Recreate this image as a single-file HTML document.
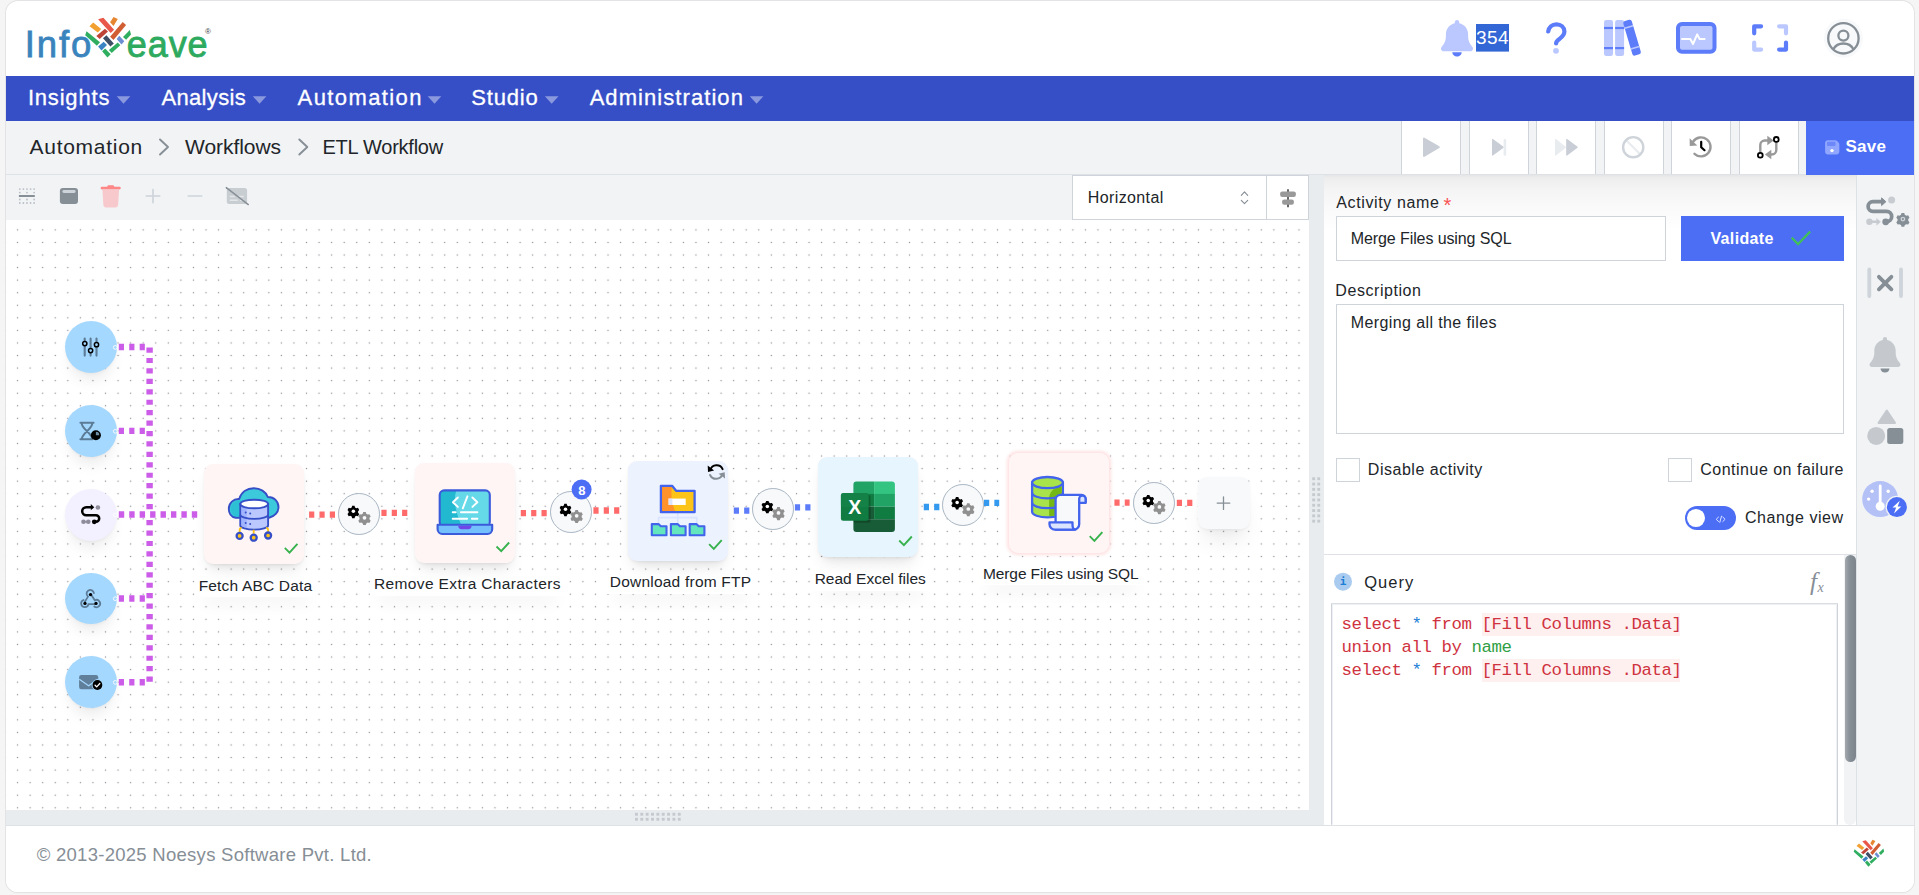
<!DOCTYPE html>
<html lang="en">
<head>
<meta charset="utf-8">
<title>ETL Workflow - Infoveave</title>
<style>
*{box-sizing:border-box;margin:0;padding:0}
html,body{width:1919px;height:895px;overflow:hidden}
body{background:#f5f5f5;font-family:"Liberation Sans",sans-serif;position:relative;color:#212529}
.abs{position:absolute}
.t{position:absolute;white-space:nowrap;line-height:1;display:block}
#card{position:absolute;left:6px;top:1px;width:1908px;height:891px;background:#fff;border-radius:12px;box-shadow:0 0 0 1px #e3e3e5,0 1px 2px rgba(0,0,0,.06);overflow:hidden}
#card>*{position:absolute}
#nav{left:0;top:75px;width:1908px;height:45px;background:#364fc7}
#crumb{left:0;top:120px;width:1908px;height:54px;background:#f1f3f5;border-bottom:1px solid #dee2e6}
#tools{left:0;top:174px;width:1303px;height:45px;background:#f1f3f5}
#canvas{left:0;top:219px;width:1303px;height:590px;background:#fff;overflow:hidden}
#vsplit{left:1303px;top:174px;width:15px;height:651px;background:#e9ecef}
#hsplit{left:0;top:809px;width:1318px;height:15px;background:#e9ecef}
#panel{left:1318px;top:174px;width:532px;height:651px;background:#fff;overflow:hidden}
#side{left:1850px;top:174px;width:58px;height:651px;background:#f1f3f5;border-left:1px solid #dee2e6}
#footer{left:0;top:824px;width:1908px;height:67px;background:#fff;border-top:1px solid #dee2e6}
.tb{position:absolute;top:121px;height:53px;width:60px;background:#fff;border-left:1px solid #ced4da;border-right:1px solid #ced4da}
svg{position:absolute;overflow:visible}
</style>
</head>
<body>
<div id="card">
  <div id="nav"></div>
  <div id="crumb"></div>
  <div id="tools"></div>
  <div id="canvas">
<div class="abs" id="cv" style="left:-6px;top:-220px;width:1919px;height:895px">
<style>
.nd{position:absolute;width:100px;height:100px;border-radius:9px;box-shadow:0 1px 3px rgba(0,0,0,.05),0 10px 15px -5px rgba(0,0,0,.10),0 7px 7px -5px rgba(0,0,0,.04)}
.st{position:absolute;left:64.700px;width:51.900px;height:51.900px;border-radius:50%;background:#a5d8ff;box-shadow:0 1px 3px rgba(0,0,0,.04),0 12px 16px -6px rgba(0,0,0,.09)}
.gc{position:absolute;width:41.800px;height:41.800px;border-radius:50%;background:#f8f9fa;border:1px solid #a9b6c3}
</style>
<svg style="left:0;top:0" width="1919" height="895" viewBox="0 0 1919 895">
  <defs>
    <pattern id="dots" x="11.280" y="223.600" width="12.563" height="12.563" patternUnits="userSpaceOnUse">
      <circle cx="6.280" cy="6.280" r=".7" fill="#8e8e98"/>
    </pattern>
  </defs>
  <rect x="6" y="220" width="1303" height="590" fill="url(#dots)"/>
  <!-- purple edges -->
  <g fill="none" stroke="#cc5de8" stroke-width="6.400" stroke-dasharray="5.200 5.230">
    <path d="M118.800 347H149.600V511"/>
    <path d="M118.800 682.200H149.600V518"/>
    <path d="M118.800 430.900h27.600"/>
    <path d="M118.800 598.500h27.600"/>
    <path d="M118.800 514.500h79.400" stroke-dasharray="5.400 5.030"/>
  </g>
  <!-- node edges -->
  <g fill="none" stroke-width="6.300" stroke-dasharray="5.200 5.150">
    <path stroke="#ff6b6b" d="M309.100 514.700H335.200"/>
    <path stroke="#ff6b6b" d="M381.400 512.800H407.800"/>
    <path stroke="#ff6b6b" d="M520.800 513.100H547"/>
    <path stroke="#ff6b6b" d="M593.400 510.500H619.300"/>
    <path stroke="#5c7cfa" d="M733.800 510.700H749.600"/>
    <path stroke="#5c7cfa" d="M794.900 507.300H810.600"/>
    <path stroke="#339af0" d="M923.800 507H939.500"/>
    <path stroke="#339af0" d="M984 502.800H999.200"/>
    <path stroke="#ff6b6b" d="M1114.400 502.600H1129.600"/>
    <path stroke="#ff6b6b" d="M1176.800 502.900H1192.400"/>
  </g>
</svg>
<!-- label bgs -->
<div class="abs" style="left:194.5px;top:574.4px;width:122.8px;height:23px;background:#fff;box-shadow:0 14px 16px -8px rgba(0,0,0,.07)"></div>
<div class="abs" style="left:370.0px;top:572.5px;width:195.0px;height:23px;background:#fff;box-shadow:0 14px 16px -8px rgba(0,0,0,.07)"></div>
<div class="abs" style="left:605.8px;top:570.5px;width:149.9px;height:23px;background:#fff;box-shadow:0 14px 16px -8px rgba(0,0,0,.07)"></div>
<div class="abs" style="left:810.5px;top:567.5px;width:120.1px;height:23px;background:#fff;box-shadow:0 14px 16px -8px rgba(0,0,0,.07)"></div>
<div class="abs" style="left:978.7px;top:562.3px;width:164.9px;height:23px;background:#fff;box-shadow:0 14px 16px -8px rgba(0,0,0,.07)"></div>
<!-- start circles -->
<div class="st" style="top:321px"></div>
<div class="st" style="top:404.900px"></div>
<div class="st" style="top:489px;background:#f3f0ff"></div>
<div class="st" style="top:572.500px"></div>
<div class="st" style="top:656.200px"></div>
<!-- nodes -->
<div class="nd" style="left:203.700px;top:464.400px;background:#fff5f5"></div>
<div class="nd" style="left:415.400px;top:463px;background:#fff5f5"></div>
<div class="nd" style="left:628px;top:460.600px;background:#edf2ff"></div>
<div class="nd" style="left:818.100px;top:457px;background:#e7f5ff"></div>
<div class="nd" style="left:1008.600px;top:452.600px;background:#fff5f5;box-shadow:0 0 3.500px 2px #ffe1e1"></div>
<div class="nd" style="left:1197.500px;top:477.300px;width:52px;height:52px;background:#f8f9fa;box-shadow:0 1px 3px rgba(0,0,0,.04),0 18px 22px -6px rgba(0,0,0,.07),0 8px 10px -6px rgba(0,0,0,.04)"></div>
<!-- gear circles -->
<div class="gc" style="left:338.200px;top:492.900px"></div>
<div class="gc" style="left:550.350px;top:490.900px"></div>
<div class="gc" style="left:752.200px;top:488px"></div>
<div class="gc" style="left:942px;top:484.100px"></div>
<div class="gc" style="left:1133.100px;top:482px"></div>
<svg style="left:0;top:0" width="1919" height="895" viewBox="0 0 1919 895">
  <defs>
    <g id="gears">
      <g transform="translate(-5.750 -2.500) scale(.930)">
        <path fill="#000" d="M-1.300-5.900h2.600l.5 1.700 1.500.9 1.700-.4 1.300 2.300-1.200 1.300v1.700l1.200 1.300-1.300 2.300-1.700-.4-1.500.9-.5 1.700h-2.600l-.5-1.700-1.500-.9-1.700.4-1.300-2.300 1.200-1.300v-1.700l-1.200-1.300 1.300-2.300 1.700.4 1.500-.9z"/>
        <circle r="1.900" fill="#fff"/>
      </g>
      <g transform="translate(5.400 4) scale(.980)">
        <path fill="#909090" d="M-1.300-5.900h2.600l.5 1.700 1.500.9 1.700-.4 1.300 2.300-1.200 1.300v1.700l1.200 1.300-1.300 2.300-1.700-.4-1.500.9-.5 1.700h-2.600l-.5-1.700-1.500-.9-1.700.4-1.300-2.300 1.200-1.300v-1.700l-1.200-1.300 1.300-2.300 1.700.4 1.500-.9z"/>
        <circle r="1.900" fill="#f8f9fa"/>
      </g>
    </g>
    <path id="chk" fill="none" stroke="#37b24d" stroke-width="1.900" stroke-linecap="square" d="M81.800 84.200l4 4 7.300-8"/>
  </defs>
  <use href="#gears" x="359.100" y="513.800"/>
  <use href="#gears" x="571.250" y="511.800"/>
  <use href="#gears" x="773.100" y="508.900"/>
  <use href="#gears" x="962.900" y="505"/>
  <use href="#gears" x="1154" y="502.900"/>
  <circle cx="581.600" cy="489.500" r="10" fill="#4c6ef5"/>
  <!-- plus -->
  <path stroke="#868e96" stroke-width="1.300" stroke-linecap="round" d="M1223.500 496.800v12.600M1217.200 503.100h12.600"/>
  <!-- handles on start circles -->
  <g fill="none" stroke="#fff" stroke-width="1" opacity=".9">
    <circle cx="115.300" cy="347.400" r="1.900"/><circle cx="115.300" cy="431.300" r="1.900"/><circle cx="115.300" cy="515" r="1.900"/><circle cx="115.300" cy="598.700" r="1.900"/><circle cx="115.300" cy="682.400" r="1.900"/>
  </g>
  <!-- start 1: sliders -->
  <g stroke="#5b7b96" stroke-width="2.100" stroke-linecap="round">
    <path d="M84.700 338.600v17M90.600 338.600v17M96.500 338.600v17"/>
  </g>
  <g fill="#a5d8ff" stroke="#000" stroke-width="1.500">
    <circle cx="84.800" cy="343.600" r="2.100"/><circle cx="90.600" cy="350.600" r="2.100"/><circle cx="96.500" cy="344.700" r="2.100"/>
  </g>
  <!-- start 2: hourglass -->
  <path fill="none" stroke="#5b7b96" stroke-width="2" stroke-linecap="round" stroke-linejoin="round" d="M80.400 422.800h13.200M80.400 439.300h11M81.700 423.200c0 6 10.600 10 10.600 16M92.300 423.200c0 6-10.600 10-10.600 16"/>
  <circle cx="95.900" cy="435.200" r="5" fill="#000"/>
  <path fill="#6f8fa8" d="M95.900 435.200v-3.400a3.400 3.400 0 0 1 3.400 3.400z"/>
  <!-- start 3: route -->
  <path fill="none" stroke="#000" stroke-width="2.500" stroke-linecap="round" d="M91.600 507.200h-5.400a4 4 0 0 0 0 8h9.700a3.300 3.300 0 0 1 0 6.600h-1.500"/>
  <path fill="#000" d="M90.800 504.100l3.500 3.100-3.500 3.100z"/>
  <circle cx="94.300" cy="521.800" r="2.400" fill="#000"/>
  <g fill="#8f8c9c"><circle cx="97.900" cy="507.500" r="2.300"/><circle cx="83.500" cy="521.800" r="2.300"/><circle cx="88.300" cy="521.800" r="2.300"/><rect x="83.500" y="521" width="4.800" height="1.600"/></g>
  <!-- start 4: webhook -->
  <g transform="translate(90.500 599.800) scale(.920) translate(-90.500 -599.500)">
  <g fill="none" stroke="#5b7b96" stroke-width="1.900" stroke-linecap="round">
    <path d="M94.200 592.300a4 4 0 1 0-6.400 3.700l-3.300 5.500"/>
    <path d="M83 599.700a4 4 0 1 0 5.300 4.400h7.800"/>
    <path d="M94.600 606.800a4 4 0 1 0 .6-6.800l-4.300-6.600"/>
  </g>
  <g fill="#000"><circle cx="90.500" cy="593.800" r="1.800"/><circle cx="84.500" cy="603.400" r="1.800"/><circle cx="96.500" cy="603.400" r="1.800"/></g>
    </g>
  <!-- start 5: mail -->
  <rect x="79.100" y="675.100" width="19.100" height="14.100" rx="2.200" fill="#5f7f9a"/>
  <path fill="none" stroke="#a5d8ff" stroke-width="1.200" d="M79.300 679.200l9.300 6.600 9.400-6.600"/>
  <circle cx="97.400" cy="685" r="5.700" fill="#a5d8ff"/>
  <circle cx="97.400" cy="685" r="4.900" fill="#000"/>
  <path fill="none" stroke="#fff" stroke-width="1.300" stroke-linecap="round" stroke-linejoin="round" d="M95.100 685.300l1.600 1.600 3.100-3.400"/>

  <!-- node 1: cloud db -->
  <g transform="translate(203.700 464.400)">
    <path fill="#3bc9db" stroke="#364fc7" stroke-width="1.900" stroke-linejoin="round" d="M32 53.300c-4.600-.6-6.900-4.700-6.900-8.800 0-5.800 4.600-10.300 10.400-9.900 2-6.900 7.700-10.800 14.600-10.800 6.500 0 12 3.600 14 8.800 6.300-.2 10.700 4.400 10.700 9.900 0 5.600-4 9.700-9.400 10.800z"/>
    <path fill="#22b8cf" opacity=".55" d="M33 52.300c-3.400-1-5.900-4-5.900-7.800 0-4.800 3.600-8.400 8.400-8.400 1.300 0 2.600.3 3.700.8v15.400z"/>
    <path fill="#bac8ff" stroke="#364fc7" stroke-width="1.900" d="M36.600 39.600v21.400c0 2.300 6.200 4.200 13.900 4.200s13.900-1.900 13.900-4.200v-21.400z"/>
    <path fill="#91a7ff" opacity=".6" d="M37.600 41v19.500c1 1.500 3 2.500 5.500 3.100v-21z"/>
    <path fill="none" stroke="#364fc7" stroke-width="1.900" d="M36.600 50.300c0 2.300 6.200 4.200 13.900 4.200s13.900-1.900 13.900-4.200"/>
    <ellipse cx="50.500" cy="39.600" rx="13.900" ry="4.300" fill="#fff" stroke="#364fc7" stroke-width="1.900"/>
    <g fill="#364fc7"><circle cx="42" cy="48.200" r="1"/><circle cx="46.500" cy="49" r="1"/><circle cx="42" cy="58.700" r="1"/><circle cx="46.500" cy="59.500" r="1"/></g>
    <path fill="none" stroke="#fcc419" stroke-width="1.900" d="M36 68v-2.500q0-2 2-2M50 69.300v-4M64.400 67.600v-2.100q0-2-2-2"/>
    <g fill="#fcc419" stroke="#364fc7" stroke-width="2.300"><circle cx="35.900" cy="71.500" r="3"/><circle cx="50" cy="73.300" r="3"/><circle cx="64.400" cy="71.100" r="3"/></g>
    <use href="#chk"/>
  </g>
  <!-- node 2: laptop -->
  <g transform="translate(415.400 463)">
    <rect x="24.300" y="27.400" width="50.100" height="34.500" rx="4.500" fill="#66d9e8"/>
    <path fill="#22b8cf" d="M28.800 27.400h12.100c-1.500 5-2 10-1 15 1 6 2.500 12 6 19.500h-21.600v-30a4.500 4.500 0 0 1 4.500-4.500z"/>
    <rect x="24.300" y="27.400" width="50.100" height="36" rx="4.500" fill="none" stroke="#3b5bdb" stroke-width="2.100"/>
    <path fill="#74c0fc" stroke="#3b5bdb" stroke-width="2.100" stroke-linejoin="round" d="M22.200 61.700h54.600v4.600a4.700 4.700 0 0 1-4.700 4.700h-45.200a4.700 4.700 0 0 1-4.700-4.700z"/>
    <path fill="#7048e8" d="M42.800 62.700h13.400c0 2.200-1.300 3.600-3.300 3.600h-6.800c-2 0-3.300-1.400-3.300-3.600z"/>
    <g fill="none" stroke="#fff" stroke-width="1.900" stroke-linecap="round" stroke-linejoin="round">
      <path d="M42.500 34.500l-5 4.700 5 4.700M57 34.500l5 4.700-5 4.700M52 33.300l-4.600 12"/>
      <path d="M37.300 49.300h3M45.500 49.300h16.500M37.300 55.700h14.500M56.500 55.700h5.500"/>
    </g>
    <use href="#chk"/>
  </g>
  <!-- node 3: folders -->
  <g transform="translate(628 460.600)">
    <path fill="none" stroke="#dbe4ff" stroke-width="1.700" d="M49.700 52.500v10M30.500 63v-6h38.300v6"/>
    <path fill="#fcc419" d="M32.900 25.200h11.200l4 5h18.500v21.400h-33.700z"/>
    <path fill="#ff922b" d="M32.900 25.200h11.200c-1.500 8.500-.5 18 3.500 26.400h-14.700z"/>
    <path fill="none" stroke="#4263eb" stroke-width="2.300" stroke-linejoin="round" d="M32.900 25.200h11.200l4 5h18.500v21.400h-33.700z"/>
    <rect x="40.600" y="38" width="17.100" height="6.400" fill="#fff"/>
    <rect x="40.600" y="38" width="3.800" height="6.400" fill="#dbe4ff"/>
    <g fill="#63e6be" stroke="#4263eb" stroke-width="2.100" stroke-linejoin="round">
      <path d="M23.800 63.500h6.700l2.300 2.200h5.700v9h-14.700z"/>
      <path d="M42.900 63.500h6.700l2.300 2.200h5.700v9h-14.700z"/>
      <path d="M61.700 63.500h6.700l2.300 2.200h5.700v9h-14.700z"/>
    </g>
    <!-- refresh -->
    <path fill="none" stroke="#000" stroke-width="2" stroke-linecap="round" d="M82.300 9.300a6.600 6.600 0 0 1 12.300-.8"/>
    <path fill="#000" d="M79.700 5l.3 6.300 6.100-1.400z"/>
    <path fill="none" stroke="#868e96" stroke-width="2" stroke-linecap="round" d="M94.400 13.600a6.600 6.600 0 0 1-12.300.8"/>
    <path fill="#868e96" d="M97 18l-.3-6.300-6.100 1.400z"/>
    <use href="#chk"/>
  </g>
  <!-- node 4: excel -->
  <g transform="translate(818.100 457)">
    <path fill="#21a366" d="M38.300 24.500h17.700v12.400h-20.700v-9.400a3 3 0 0 1 3-3z"/>
    <path fill="#33c481" d="M56 24.500h17.800a3 3 0 0 1 3 3v9.400h-20.800z"/>
    <rect x="35.300" y="36.900" width="20.700" height="12.700" fill="#107c41"/>
    <rect x="56" y="36.900" width="20.800" height="12.700" fill="#21a366"/>
    <rect x="35.300" y="49.600" width="20.700" height="12.700" fill="#185c37"/>
    <rect x="56" y="49.600" width="20.800" height="12.700" fill="#107c41"/>
    <path fill="#185c37" d="M35.300 62.300h41.500v9.800a3 3 0 0 1-3 3h-35.500a3 3 0 0 1-3-3z"/>
    <rect x="35.300" y="37.900" width="17.200" height="27.800" rx="2" fill="#000" opacity=".22"/>
    <rect x="22.800" y="35.900" width="27.700" height="27.800" rx="2.500" fill="#107c41"/>
    <rect x="22.800" y="35.900" width="27.700" height="14" rx="2.500" fill="#18864b" opacity=".6"/>
    <text x="36.650" y="56.700" text-anchor="middle" font-family="Liberation Sans, sans-serif" font-weight="700" font-size="19.500" fill="#fff">X</text>
    <use href="#chk"/>
  </g>
  <!-- node 5: db + scroll -->
  <g transform="translate(1008.600 452.600)">
    <path fill="#a9e34b" stroke="#4263eb" stroke-width="2.300" d="M23.500 30v29.200c0 3.100 6.900 5.600 15.400 5.600s15.400-2.500 15.400-5.600v-29.200z"/>
    <path fill="#74b816" d="M53.200 34v26c-2 2-6 3.300-12.700 3.700v-18c0-6 5-11.200 12.700-11.700z"/>
    <path fill="none" stroke="#4263eb" stroke-width="2.300" d="M23.500 40.200c0 3.100 6.900 5.600 15.400 5.600s15.400-2.500 15.400-5.600M23.500 50c0 3.100 6.900 5.600 15.400 5.600s15.400-2.500 15.400-5.600"/>
    <ellipse cx="38.900" cy="30" rx="15.400" ry="5.600" fill="#a9e34b" stroke="#4263eb" stroke-width="2.300"/>
    <path fill="#f8f9fa" stroke="#4263eb" stroke-width="2.300" stroke-linejoin="round" d="M47 70v-22.800a5 5 0 0 1 5-5h21a4 4 0 0 1 4 4v4h-6.400v21.500a5.300 5.300 0 0 1-5.300 5.300h-18.300z"/>
    <path fill="#dbe4ff" stroke="#4263eb" stroke-width="2.300" stroke-linejoin="round" d="M70.600 50.200v-4a3.200 3.200 0 0 1 6.400 0v4z"/>
    <path fill="#dbe4ff" stroke="#4263eb" stroke-width="2.300" stroke-linejoin="round" d="M40.900 69.800h23v2.400c0 2.800 1 4.800 3 4.800h-20.700a5.300 5.300 0 0 1-5.300-5.300z"/>
    <use href="#chk"/>
  </g>
</svg>

</div>

  </div>
  <div id="vsplit"></div>
  <div id="hsplit"></div>
  <div id="panel"></div>
  <div id="side"></div>
  <div id="footer"></div>
</div>
<!-- overlays positioned in page coordinates -->
<svg id="hdr" style="left:0;top:0" width="1919" height="120" viewBox="0 0 1919 120">
  <defs>
    <g id="weave">
      <polygon fill="#f2a02f" points="89.5,26.3 93.2,22.6 101.2,29.1 97.8,32.4"/>
      <polygon fill="#e8574a" points="98.1,19.2 103.4,17.7 114.1,29.7 110.7,33.0"/>
      <polygon fill="#e68630" points="113.5,17.1 117.8,18.9 113.5,26.0 110.1,22.3"/>
      <polygon fill="#d15d33" points="122.7,22.0 126.1,25.1 113.5,40.1 110.1,36.7"/>
      <polygon fill="#be4438" points="96.3,36.1 104.9,28.7 108.0,31.5 99.7,38.9"/>
      <polygon fill="#3e4f66" points="103.0,38.3 106.4,35.2 113.8,43.5 110.4,46.6"/>
      <polygon fill="#2fae60" points="85.2,35.2 86.5,31.2 100.0,42.3 96.9,45.7"/>
      <polygon fill="#3a84c4" points="98.1,46.6 103.7,41.7 107.0,45.0 101.5,50.6"/>
      <polygon fill="#2fae60" points="102.1,51.2 105.2,48.4 110.7,54.3 107.4,57.6"/>
      <polygon fill="#2fae60" points="108.9,50.0 117.8,42.6 120.3,45.3 111.7,53.0"/>
      <polygon fill="#6b8fd0" points="116.6,38.9 119.3,35.8 124.3,41.3 121.5,44.4"/>
      <polygon fill="#2fae60" points="123.0,37.0 129.8,30.0 131.0,34.6 126.1,39.8"/>
    </g>
  </defs>
  <use href="#weave"/>
  <!-- bell -->
  <path fill="#bac8ff" d="M1457 19.9c1.3 0 2.2 1 2.2 2.2v1.1c5.2 1 8.9 5.6 8.900 11v2.300c0 3.400 1.200 6.700 3.400 9.300l.9 1.100c.7.800.8 1.900.4 2.800-.4.900-1.300 1.500-2.300 1.500h-27c-1 0-1.900-.6-2.300-1.500-.4-.9-.3-2 .4-2.800l.9-1.100c2.200-2.600 3.400-5.900 3.400-9.300v-2.300c0-5.400 3.800-10 8.900-11v-1.100c0-1.200.9-2.200 2.200-2.200z"/>
  <path fill="#5c7cfa" d="M1452.300 52.200h9.400c0 2.400-2.100 4.300-4.700 4.300s-4.700-1.900-4.700-4.300z"/>
  <!-- 354 selection -->
  <rect x="1476" y="24" width="33" height="27.6" fill="#3367d6"/>
  <!-- question -->
  <path fill="none" stroke="#5c7cfa" stroke-width="4.2" stroke-linecap="round" d="M1548.200 31.500c.7-4.300 3.800-7.200 8.200-7.200 4.500 0 8 3 8 7.300 0 3.600-2.200 5.400-5 7.300-2.300 1.500-3.300 2.800-3.300 4.600"/>
  <circle cx="1556" cy="50.800" r="2.900" fill="#bac8ff"/>
  <!-- books -->
  <rect x="1604" y="20" width="9" height="36" rx="2.200" fill="#bac8ff"/>
  <rect x="1615.100" y="20" width="9" height="36" rx="2.200" fill="#bac8ff"/>
  <rect x="1604" y="26.900" width="9" height="2.200" fill="#5c7cfa"/>
  <rect x="1604" y="47" width="9" height="2.200" fill="#5c7cfa"/>
  <rect x="1615.100" y="26.900" width="9" height="2.200" fill="#5c7cfa"/>
  <rect x="1615.100" y="47" width="9" height="2.200" fill="#5c7cfa"/>
  <g transform="rotate(-16.500 1632 37.500)">
    <rect x="1627.600" y="19.700" width="8.800" height="36" rx="2.200" fill="#5c7cfa"/>
    <rect x="1627.600" y="25.700" width="8.800" height="1.600" fill="#bac8ff"/>
    <rect x="1627.600" y="47.300" width="8.800" height="1.600" fill="#bac8ff"/>
  </g>
  <!-- monitor -->
  <rect x="1678" y="24" width="36.500" height="27.800" rx="4" fill="#bac8ff" stroke="#5c7cfa" stroke-width="4"/>
  <path fill="none" stroke="#fff" stroke-width="2" stroke-linecap="round" stroke-linejoin="round" d="M1682 39h8.300l2.700 5 4.200-9.600 2.400 4.600h5"/>
  <!-- fullscreen -->
  <g fill="none" stroke-width="4.200" stroke-linecap="round" stroke-linejoin="round">
    <path stroke="#5c7cfa" d="M1754.200 33.300v-7h6.900"/>
    <path stroke="#bac8ff" d="M1779.100 26.300h6.900v7"/>
    <path stroke="#bac8ff" d="M1754.200 42.600v7h6.900"/>
    <path stroke="#5c7cfa" d="M1779.100 49.600h6.900v-7"/>
  </g>
  <!-- user -->
  <circle cx="1843.400" cy="38.300" r="19.500" fill="#f8f9fa"/>
  <g fill="none" stroke="#868e96" stroke-width="2.300">
    <circle cx="1843.400" cy="38.300" r="15.200"/>
    <circle cx="1843.400" cy="35.600" r="5"/>
    <path d="M1833.300 49.300c2-3.600 5.700-5.800 10.100-5.800s8.100 2.200 10.100 5.800"/>
  </g>
  <!-- nav carets -->
  <g fill="#fff" fill-opacity=".42">
    <path d="M116.700 96.200h13.600l-6.800 7.500z"/>
    <path d="M252.800 96.200h13.600l-6.800 7.500z"/>
    <path d="M427.700 96.200h13.600l-6.800 7.500z"/>
    <path d="M544.900 96.200h13.600l-6.800 7.500z"/>
    <path d="M749.800 96.200h13.600l-6.800 7.500z"/>
  </g>
</svg>

<div class="tb" style="left:1401px"></div>
<div class="tb" style="left:1469px"></div>
<div class="tb" style="left:1536px"></div>
<div class="tb" style="left:1604px"></div>
<div class="tb" style="left:1671px"></div>
<div class="tb" style="left:1739px"></div>
<div class="abs" style="left:1806px;top:121px;width:108px;height:53.500px;background:#4c6ef5"></div>
<div class="abs" style="left:1072px;top:175px;width:195px;height:45px;background:#fff;border:1px solid #ced4da"></div>
<div class="abs" style="left:1267px;top:175px;width:42px;height:45px;background:#fff;border:1px solid #ced4da;border-left:none"></div>
<svg id="tbr" style="left:0;top:0" width="1919" height="230" viewBox="0 0 1919 230">
  <!-- breadcrumb chevrons -->
  <g fill="none" stroke="#868e96" stroke-width="1.900" stroke-linecap="round" stroke-linejoin="round">
    <path d="M160 139.500l8 7.500-8 7.500"/>
    <path d="M299.300 139.500l8 7.500-8 7.500"/>
  </g>
  <!-- play -->
  <path fill="#c9ced6" stroke="#c9ced6" stroke-width="2" stroke-linejoin="round" d="M1424 138.500v17.400l14.800-8.700z"/>
  <!-- step -->
  <path fill="#c9ced6" stroke="#c9ced6" stroke-width="1.200" stroke-linejoin="round" d="M1492.600 139.500v15.600l10.600-7.800z"/>
  <rect x="1503.600" y="138.900" width="2.600" height="16.800" rx="1.200" fill="#e9ecef"/>
  <!-- ff -->
  <path fill="#e9ecef" stroke="#e9ecef" stroke-width="1.200" stroke-linejoin="round" d="M1555.600 139.500v15.600l9.800-7.800z"/>
  <path fill="#c9ced6" stroke="#c9ced6" stroke-width="1.200" stroke-linejoin="round" d="M1566.800 139.500v15.600l10.400-7.800z"/>
  <!-- ban -->
  <path stroke="#e9ecef" stroke-width="2.200" d="M1626.200 140.200l14 14"/>
  <circle cx="1633.200" cy="147.200" r="10.100" fill="none" stroke="#ced4da" stroke-width="2.400"/>
  <!-- history -->
  <g>
    <path fill="none" stroke="#999" stroke-width="2.400" stroke-linecap="round" d="M1693.200 141.500a9.500 9.500 0 1 1 1.300 12.300"/>
    <path fill="#999" d="M1689.600 138.300l.2 7.600 7.500-.3z"/>
    <path fill="none" stroke="#000" stroke-width="2.200" stroke-linecap="round" stroke-linejoin="round" d="M1701.200 141.800v5.400l3.300 3"/>
  </g>
  <!-- compare/loop -->
  <g fill="none" stroke="#999" stroke-width="2.400" stroke-linecap="round" stroke-linejoin="round">
    <path d="M1760.300 152.500v-7.500a4.500 4.500 0 0 1 4.500-4.500h4"/>
    <path d="M1776.300 142.500v7.500a4.500 4.500 0 0 1-4.500 4.500h-3"/>
  </g>
  <path fill="#999" d="M1767.300 135.800l6.400 4.700-6.400 4.700z"/>
  <path fill="#999" d="M1771.300 149.800l-6.400 4.700 6.400 4.700z"/>
  <circle cx="1776.300" cy="139.400" r="2.400" fill="#fff" stroke="#000" stroke-width="1.800"/>
  <circle cx="1760.300" cy="155.300" r="2.400" fill="#fff" stroke="#000" stroke-width="1.800"/>
  <!-- save icon -->
  <path fill="#91a7ff" d="M1827.800 140.300h7.200c.8 0 1.500.3 2 .8l1.500 1.500c.5.500.8 1.200.8 2v7.200c0 1.500-1.200 2.700-2.700 2.700h-8.800c-1.500 0-2.700-1.200-2.700-2.700v-8.800c0-1.500 1.200-2.700 2.700-2.700z"/>
  <rect x="1827" y="141.800" width="8.500" height="4.200" rx=".8" fill="#4c6ef5" fill-opacity=".55"/>
  <circle cx="1832" cy="150.600" r="1.700" fill="#fff"/>
  <!-- tool row icons -->
  <g fill="#b9bfc6">
    <circle cx="19.800" cy="189.100" r=".9"/><circle cx="23.400" cy="189.100" r=".9"/><circle cx="27" cy="189.100" r=".9"/><circle cx="30.600" cy="189.100" r=".9"/><circle cx="34.100" cy="189.100" r=".9"/>
    <circle cx="19.800" cy="192.600" r=".9"/><circle cx="27" cy="192.600" r=".9"/><circle cx="34.100" cy="192.600" r=".9"/>
    <circle cx="19.800" cy="199.500" r=".9"/><circle cx="27" cy="199.500" r=".9"/><circle cx="34.100" cy="199.500" r=".9"/>
    <circle cx="19.800" cy="203" r=".9"/><circle cx="23.400" cy="203" r=".9"/><circle cx="27" cy="203" r=".9"/><circle cx="30.600" cy="203" r=".9"/><circle cx="34.100" cy="203" r=".9"/>
  </g>
  <rect x="18.900" y="195" width="15.900" height="2" fill="#868e96"/>
  <rect x="59.900" y="187.900" width="18.100" height="16.100" rx="3" fill="#868e96"/>
  <rect x="62.400" y="190.100" width="13.200" height="2.800" rx="1.400" fill="#ced4da"/>
  <path fill="#ff8787" d="M102 186.800h5l1-1.500h5.400l1 1.500h5c.8 0 1.400.6 1.400 1.300s-.6 1.300-1.400 1.300h-17.400c-.8 0-1.400-.6-1.400-1.300s.6-1.300 1.400-1.300z"/>
  <path fill="#f8c9cc" d="M102.400 189.400h16.700l-1 15.600c-.1 1.400-1.200 2.400-2.600 2.400h-9.500c-1.400 0-2.500-1-2.600-2.400z"/>
  <g stroke="#ced4da" stroke-width="1.700" stroke-linecap="round">
    <path d="M153 189.600v13M146.400 196h13.200"/>
    <path d="M188.300 196h13.300"/>
  </g>
  <rect x="226.800" y="187.900" width="20.300" height="16.100" rx="2.500" fill="#c8cdd2"/>
  <path stroke="#e3e6e9" stroke-width="1.500" d="M229.800 196.600h5M236.800 196.600h7M229.800 200.200h8M239.800 200.200h4"/>
  <path stroke="#868e96" stroke-width="1.400" stroke-linecap="round" d="M226.300 187.600l22 17"/>
  <!-- select chevrons -->
  <g fill="none" stroke="#868e96" stroke-width="1.100" stroke-linecap="round" stroke-linejoin="round">
    <path d="M1241.300 195.300l3.200-3.400 3.200 3.400"/>
    <path d="M1241.300 200.300l3.200 3.400 3.200-3.400"/>
  </g>
  <!-- align icon -->
  <path stroke="#000" stroke-width="1.200" d="M1288 189.200v18"/>
  <rect x="1280.100" y="191.600" width="15.800" height="5.400" rx="2.200" fill="#999"/>
  <rect x="1282.100" y="199.400" width="11.800" height="5.400" rx="2.200" fill="#999"/>
</svg>

<div class="abs" style="left:1324px;top:174.500px;width:532px;height:52px;background:linear-gradient(to bottom,rgba(0,0,0,.10),rgba(0,0,0,.07) 3px,rgba(0,0,0,.045) 14px,rgba(0,0,0,.02) 34px,rgba(0,0,0,0) 56px);height:58px"></div>
<div class="abs" style="left:1336px;top:216px;width:330px;height:45px;background:#fff;border:1px solid #ced4da"></div>
<div class="abs" style="left:1681px;top:216px;width:163px;height:45px;background:#4c6ef5"></div>
<div class="abs" style="left:1336px;top:304px;width:508px;height:130px;background:#fff;border:1px solid #ced4da"></div>
<div class="abs" style="left:1336px;top:458px;width:24px;height:24px;background:#fff;border:1px solid #ced4da"></div>
<div class="abs" style="left:1668px;top:458px;width:24px;height:24px;background:#fff;border:1px solid #ced4da"></div>
<div class="abs" style="left:1684.800px;top:505.900px;width:51.400px;height:24px;border-radius:12px;background:#4c6ef5"></div>
<div class="abs" style="left:1686.900px;top:509.100px;width:17.800px;height:17.800px;border-radius:50%;background:#fff"></div>
<div class="abs" style="left:1324px;top:554.200px;width:532px;height:1px;background:#dee2e6"></div>
<!-- code editor -->
<div class="abs" style="left:1330.500px;top:603.200px;width:507.600px;height:240px;background:#fff;border:1px solid #cdd3d9;box-shadow:inset 0 0 0 1px #eef0f3;clip-path:inset(0 0 18.500px 0)"></div>
<div class="abs" style="left:1481.600px;top:613.400px;width:198.600px;height:22.400px;background:#fff0f0"></div>
<div class="abs" style="left:1481.600px;top:659.400px;width:198.600px;height:22.400px;background:#fff0f0"></div>
<div class="t code" style="left:1341.600px;top:615.300px"><span class="k">select</span> <span class="o">*</span> <span class="k">from</span> <span class="k">[Fill Columns .Data]</span></div>
<div class="t code" style="left:1341.600px;top:638.300px"><span class="k">union all by</span> <span class="g">name</span></div>
<div class="t code" style="left:1341.600px;top:661.300px"><span class="k">select</span> <span class="o">*</span> <span class="k">from</span> <span class="k">[Fill Columns .Data]</span></div>
<style>
.code{font-family:"Liberation Mono","DejaVu Sans Mono",monospace;font-size:17.400px;letter-spacing:-.44px;line-height:20px;white-space:pre}
.code .k{color:#cf3340}.code .o{color:#1c7ed6}.code .g{color:#2f9e44}
</style>
<!-- scrollbar -->
<div class="abs" style="left:1844px;top:555px;width:12px;height:269.500px;background:#f1f3f5;border-radius:0 0 6px 6px"></div>
<div class="abs" style="left:1844.500px;top:555px;width:11px;height:207px;border-radius:5.500px;background:linear-gradient(90deg,#a4a9ae,#868e96 45%,#7d848b)"></div>
<svg style="left:0;top:0" width="1919" height="895" viewBox="0 0 1919 895">
  <!-- validate check -->
  <path fill="none" stroke="#40c057" stroke-width="2.300" stroke-linecap="square" d="M1792.500 238.500l5.600 5.600 11.300-11.800"/>
  <!-- toggle code glyph -->
  <g fill="none" stroke="#dbe4ff" stroke-width="1" stroke-linecap="round" stroke-linejoin="round">
    <path d="M1718.500 517.100l-2.300 2.200 2.300 2.200M1722.800 517.100l2.300 2.200-2.300 2.200M1721.500 516.200l-1.700 6.200"/>
  </g>
  <!-- info -->
  <circle cx="1343" cy="581.700" r="9" fill="#a9cbef"/>
  <!-- fx -->
</svg>
<span class="t" style="left:1339.700px;top:576.300px;font-size:11px;font-weight:700;color:#1c7ed6;font-family:'DejaVu Sans Mono','Liberation Mono',monospace">i</span>
<span class="t" style="left:1810px;top:569px;font-size:25px;font-style:italic;color:#868e96;font-family:'Liberation Serif',serif">f</span>
<span class="t" style="left:1817.500px;top:580.500px;font-size:14px;font-style:italic;color:#868e96;font-family:'Liberation Serif',serif">x</span>

<svg style="left:0;top:0" width="1919" height="895" viewBox="0 0 1919 895">
  <!-- route+gear -->
  <g fill="#c8ccd1"><circle cx="1891.600" cy="200" r="3.500"/><circle cx="1869.400" cy="221.800" r="3.200"/><path d="M1869.400 220.500h7v-2.600l4.400 3.900-4.400 3.900v-2.600h-7z"/></g>
  <path fill="none" stroke="#868e96" stroke-width="3.700" stroke-linecap="round" d="M1882.500 201.700h-9.600a4.800 4.800 0 0 0 0 9.600h13.600a5.200 5.200 0 0 1 0 10.400h-1"/>
  <path fill="#868e96" stroke="#868e96" stroke-width="1" stroke-linejoin="round" d="M1881.600 197.900l4.300 3.800-4.300 3.800z"/>
  <circle cx="1885.700" cy="221.800" r="3.400" fill="#868e96"/>
  <g transform="translate(1902.900 219.100) scale(1.050)">
    <path fill="#868e96" d="M-1.300-5.900h2.600l.5 1.700 1.500.9 1.700-.4 1.300 2.300-1.200 1.300v1.700l1.200 1.300-1.300 2.300-1.700-.4-1.500.9-.5 1.700h-2.600l-.5-1.700-1.500-.9-1.700.4-1.300-2.300 1.200-1.300v-1.700l-1.200-1.300 1.300-2.300 1.700.4 1.500-.9z"/>
    <circle r="2.300" fill="#ced4da"/><circle r="1" fill="#868e96"/>
  </g>
  <!-- |x| -->
  <rect x="1867.400" y="267.500" width="3.800" height="30.400" rx="1.900" fill="#ced4da"/>
  <rect x="1899.100" y="267.500" width="3.800" height="30.400" rx="1.900" fill="#ced4da"/>
  <path stroke="#868e96" stroke-width="3.800" stroke-linecap="round" d="M1878.900 276.800l12.500 12.500M1891.400 276.800l-12.500 12.500"/>
  <!-- bell -->
  <path fill="#c5c9ce" d="M1885 337c1.200 0 2.100.9 2.100 2.100v1c5 1 8.600 5.400 8.600 10.600v2.300c0 3.300 1.200 6.400 3.300 8.900l.9 1c.6.800.8 1.800.4 2.700-.4.900-1.300 1.500-2.200 1.500h-26.200c-1 0-1.800-.6-2.200-1.500-.4-.9-.2-1.900.4-2.700l.9-1c2.100-2.500 3.300-5.600 3.300-8.900v-2.300c0-5.200 3.600-9.600 8.600-10.600v-1c0-1.200.9-2.100 2.100-2.100z"/>
  <path fill="#868e96" d="M1880.500 368.400h9c0 2.300-2 4.100-4.500 4.100s-4.500-1.800-4.500-4.100z"/>
  <!-- shapes -->
  <path fill="#c5c9ce" stroke="#c5c9ce" stroke-width="2" stroke-linejoin="round" d="M1886.800 410.500l8.200 12.400h-16.400z"/>
  <circle cx="1876.200" cy="435.900" r="9" fill="#c5c9ce"/>
  <rect x="1887.200" y="427.900" width="16.100" height="16.100" rx="2.500" fill="#868e96"/>
  <!-- dashboard -->
  <circle cx="1880.200" cy="499.100" r="18" fill="#b4c1f7"/>
  <path stroke="#fff" stroke-width="2.800" stroke-linecap="round" d="M1880.200 486v18"/>
  <circle cx="1880.200" cy="506.300" r="4.500" fill="#fff"/>
  <g fill="#fff"><circle cx="1872.100" cy="491.200" r="1.700"/><circle cx="1888.200" cy="491.200" r="1.700"/><circle cx="1868.600" cy="499.100" r="1.700"/></g>
  <circle cx="1896.900" cy="507.100" r="11.300" fill="#f1f3f5"/>
  <circle cx="1896.900" cy="507.100" r="10" fill="#4c6ef5"/>
  <path fill="#fff" d="M1899.800 500.800l-7.300 6.800h3.600l-2.100 5.800 7.300-6.900h-3.600z"/>
</svg>

<svg style="left:0;top:0" width="1919" height="895" viewBox="0 0 1919 895">
  <g transform="translate(1853.700 839.800) scale(.665) translate(-85.200 -17.100)"><use href="#weave"/></g>
  <!-- splitter grips -->
  <g fill="#c5cacf">
    <g id="hg"><rect x="635" y="812.800" width="2.900" height="2.900"/><rect x="635" y="817.800" width="2.900" height="2.900"/></g>
    <use href="#hg" x="5.350"/><use href="#hg" x="10.700"/><use href="#hg" x="16.050"/><use href="#hg" x="21.400"/><use href="#hg" x="26.750"/><use href="#hg" x="32.100"/><use href="#hg" x="37.450"/><use href="#hg" x="42.800"/>
    <g id="vg"><rect x="1312.200" y="477.300" width="2.900" height="2.900"/><rect x="1317.300" y="477.300" width="2.900" height="2.900"/></g>
    <use href="#vg" y="5.300"/><use href="#vg" y="10.600"/><use href="#vg" y="15.900"/><use href="#vg" y="21.200"/><use href="#vg" y="26.500"/><use href="#vg" y="31.800"/><use href="#vg" y="37.100"/><use href="#vg" y="42.400"/>
  </g>
</svg>

<span class="t" id="t0" style="left:24.80px;top:27.10px;font-size:36.5px;color:#3a84bd;letter-spacing:1.871px;-webkit-text-stroke:.8px #3a84bd;">Info</span>
<span class="t" id="t1" style="left:126.85px;top:26.53px;font-size:36px;color:#2eaa5f;letter-spacing:0.899px;-webkit-text-stroke:.8px #2eaa5f;">eave</span>
<span class="t" id="t2" style="left:205.09px;top:27.63px;font-size:8px;color:#444;">®</span>
<span class="t" id="t3" style="left:1476.02px;top:28.32px;font-size:19px;color:#fff;letter-spacing:0.436px;">354</span>
<span class="t" id="t4" style="left:27.92px;top:86.78px;font-size:22px;color:#fff;letter-spacing:0.808px;-webkit-text-stroke:.3px #fff;">Insights</span>
<span class="t" id="t5" style="left:161.45px;top:86.78px;font-size:22px;color:#fff;letter-spacing:0.332px;-webkit-text-stroke:.3px #fff;">Analysis</span>
<span class="t" id="t6" style="left:297.58px;top:86.78px;font-size:22px;color:#fff;letter-spacing:1.396px;-webkit-text-stroke:.3px #fff;">Automation</span>
<span class="t" id="t7" style="left:471.36px;top:86.78px;font-size:22px;color:#fff;letter-spacing:0.801px;-webkit-text-stroke:.3px #fff;">Studio</span>
<span class="t" id="t8" style="left:589.63px;top:86.78px;font-size:22px;color:#fff;letter-spacing:1.069px;-webkit-text-stroke:.3px #fff;">Administration</span>
<span class="t" id="t9" style="left:29.50px;top:136.42px;font-size:21px;color:#212529;letter-spacing:0.720px;">Automation</span>
<span class="t" id="t10" style="left:185.02px;top:136.42px;font-size:21px;color:#212529;letter-spacing:-0.054px;">Workflows</span>
<span class="t" id="t11" style="left:322.51px;top:137.27px;font-size:20px;color:#212529;letter-spacing:-0.243px;">ETL Workflow</span>
<span class="t" id="t12" style="left:1845.60px;top:138.11px;font-size:17px;color:#fff;font-weight:700;letter-spacing:0.181px;">Save</span>
<span class="t" id="t13" style="left:1087.77px;top:189.76px;font-size:16px;color:#212529;letter-spacing:0.382px;">Horizontal</span>
<span class="t" id="t14" style="left:198.66px;top:577.78px;font-size:15.5px;color:#212529;letter-spacing:0.181px;">Fetch ABC Data</span>
<span class="t" id="t15" style="left:374.00px;top:575.88px;font-size:15.5px;color:#212529;letter-spacing:0.368px;">Remove Extra Characters</span>
<span class="t" id="t16" style="left:609.79px;top:573.88px;font-size:15.5px;color:#212529;letter-spacing:0.217px;">Download from FTP</span>
<span class="t" id="t17" style="left:814.66px;top:570.88px;font-size:15.5px;color:#212529;letter-spacing:0.004px;">Read Excel files</span>
<span class="t" id="t18" style="left:982.98px;top:565.68px;font-size:15.5px;color:#212529;letter-spacing:-0.100px;">Merge Files using SQL</span>
<span class="t" id="t19" style="left:578.25px;top:483.60px;font-size:13px;color:#fff;font-weight:700;">8</span>
<span class="t" id="t20" style="left:1336.32px;top:195.46px;font-size:16px;color:#212529;letter-spacing:0.611px;">Activity name</span>
<span class="t" id="t21" style="left:1443.57px;top:194.67px;font-size:20px;color:#fa5252;">*</span>
<span class="t" id="t22" style="left:1350.82px;top:231.36px;font-size:16px;color:#212529;letter-spacing:-0.099px;">Merge Files using SQL</span>
<span class="t" id="t23" style="left:1710.42px;top:231.46px;font-size:16px;color:#fff;font-weight:700;letter-spacing:0.369px;">Validate</span>
<span class="t" id="t24" style="left:1335.36px;top:282.66px;font-size:16px;color:#212529;letter-spacing:0.558px;">Description</span>
<span class="t" id="t25" style="left:1350.82px;top:315.46px;font-size:16px;color:#212529;letter-spacing:0.393px;">Merging all the files</span>
<span class="t" id="t26" style="left:1367.82px;top:461.76px;font-size:16px;color:#212529;letter-spacing:0.518px;">Disable activity</span>
<span class="t" id="t27" style="left:1700.26px;top:461.76px;font-size:16px;color:#212529;letter-spacing:0.497px;">Continue on failure</span>
<span class="t" id="t28" style="left:1744.92px;top:510.16px;font-size:16px;color:#212529;letter-spacing:0.569px;">Change view</span>
<span class="t" id="t29" style="left:1364.30px;top:573.63px;font-size:16.5px;color:#212529;letter-spacing:0.985px;">Query</span>
<span class="t" id="t30" style="left:36.66px;top:846.34px;font-size:18.5px;color:#868e96;letter-spacing:0.274px;">© 2013-2025 Noesys Software Pvt. Ltd.</span>
</body>
</html>
